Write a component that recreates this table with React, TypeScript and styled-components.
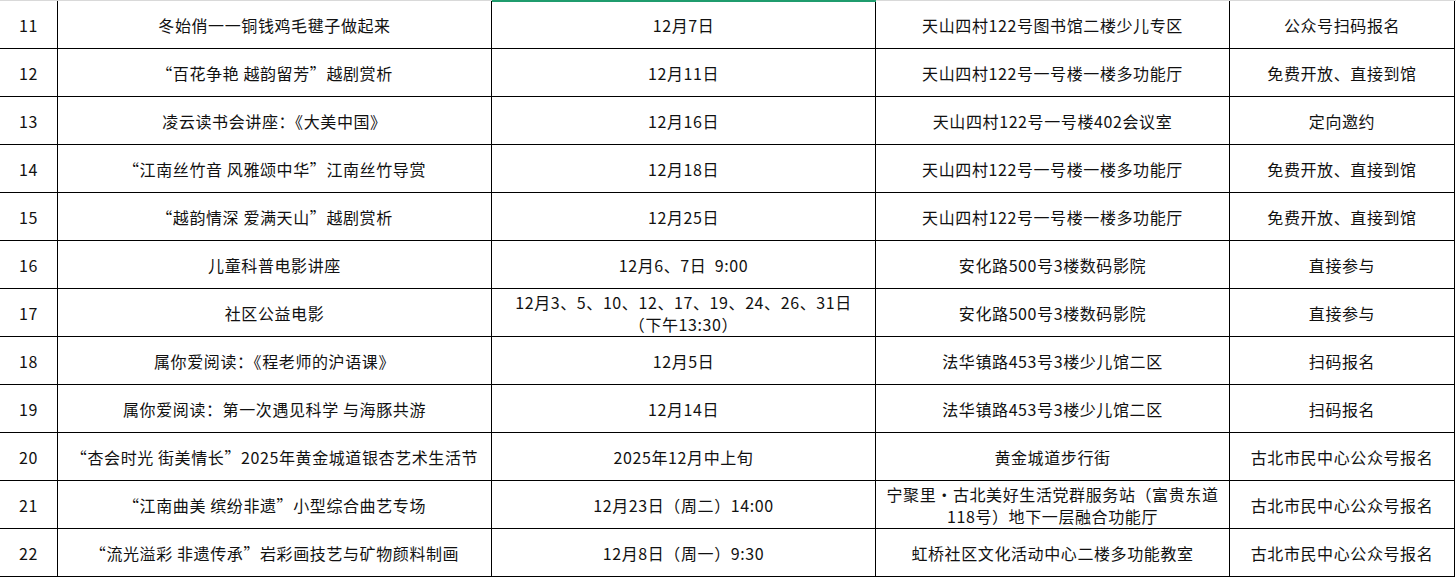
import styled, { createGlobalStyle } from "styled-components";

const GlobalStyle = createGlobalStyle`
  html, body {
    margin: 0;
    padding: 0;
    background: #ffffff;
  }
  body {
    font-family: "Noto Sans CJK SC", "DejaVu Sans", sans-serif;
    color: #000000;
  }
`;

const COLUMNS = "58px 434px 384px 354px 225px";

const Sheet = styled.div`
  width: 1456px;
  height: 577px;
  overflow: hidden;
  background: #ffffff;
`;

const TopEdge = styled.div`
  display: grid;
  grid-template-columns: ${COLUMNS};
  height: 1px;
  background: #d9d9d9;
`;

const Selection = styled.div<{ $col: number }>`
  grid-column: ${(p) => p.$col};
  height: 2px;
  background: #1f9c6d;
  position: relative;
  z-index: 1;
`;

const Row = styled.div`
  display: grid;
  grid-template-columns: ${COLUMNS};
  height: 48px;
`;

const Cell = styled.div`
  display: flex;
  align-items: center;
  justify-content: center;
  text-align: center;
  border-right: 1px solid #000000;
  border-bottom: 1px solid #000000;
  font-size: 16px;
  line-height: 22px;
  letter-spacing: 0.6px;
  color: #111111;
  white-space: nowrap;
  overflow: hidden;
`;

// full-width quote marks, as in the sheet's font
const Quote = styled.span`
  font-feature-settings: "fwid";
`;

type Item = {
  no: number;
  title: string;
  date: string[];
  place: string[];
  signup: string;
};

const rows: Item[] = [
  { no: 11, title: "冬始俏一一铜钱鸡毛毽子做起来", date: ["12月7日"], place: ["天山四村122号图书馆二楼少儿专区"], signup: "公众号扫码报名" },
  { no: 12, title: "“百花争艳 越韵留芳”越剧赏析", date: ["12月11日"], place: ["天山四村122号一号楼一楼多功能厅"], signup: "免费开放、直接到馆" },
  { no: 13, title: "凌云读书会讲座：《大美中国》", date: ["12月16日"], place: ["天山四村122号一号楼402会议室"], signup: "定向邀约" },
  { no: 14, title: "“江南丝竹音 风雅颂中华”江南丝竹导赏", date: ["12月18日"], place: ["天山四村122号一号楼一楼多功能厅"], signup: "免费开放、直接到馆" },
  { no: 15, title: "“越韵情深 爱满天山”越剧赏析", date: ["12月25日"], place: ["天山四村122号一号楼一楼多功能厅"], signup: "免费开放、直接到馆" },
  { no: 16, title: "儿童科普电影讲座", date: ["12月6、7日  9:00"], place: ["安化路500号3楼数码影院"], signup: "直接参与" },
  { no: 17, title: "社区公益电影", date: ["12月3、5、10、12、17、19、24、26、31日", "（下午13:30）"], place: ["安化路500号3楼数码影院"], signup: "直接参与" },
  { no: 18, title: "属你爱阅读：《程老师的沪语课》", date: ["12月5日"], place: ["法华镇路453号3楼少儿馆二区"], signup: "扫码报名" },
  { no: 19, title: "属你爱阅读：第一次遇见科学 与海豚共游", date: ["12月14日"], place: ["法华镇路453号3楼少儿馆二区"], signup: "扫码报名" },
  { no: 20, title: "“杏会时光 街美情长”2025年黄金城道银杏艺术生活节", date: ["2025年12月中上旬"], place: ["黄金城道步行街"], signup: "古北市民中心公众号报名" },
  { no: 21, title: "“江南曲美 缤纷非遗”小型综合曲艺专场", date: ["12月23日（周二）14:00"], place: ["宁聚里·古北美好生活党群服务站（富贵东道", "118号）地下一层融合功能厅"], signup: "古北市民中心公众号报名" },
  { no: 22, title: "“流光溢彩 非遗传承”岩彩画技艺与矿物颜料制画", date: ["12月8日（周一）9:30"], place: ["虹桥社区文化活动中心二楼多功能教室"], signup: "古北市民中心公众号报名" },
];

const Title = ({ text }: { text: string }) => (
  <span>
    {text.split(/([“”])/).map((part, i) =>
      part === "“" || part === "”" ? <Quote key={i}>{part}</Quote> : part
    )}
  </span>
);

const Lines = ({ parts }: { parts: string[] }) => (
  <span style={{ whiteSpace: "pre" }}>
    {parts.map((p, i) => (
      <span key={i}>
        {i > 0 && <br />}
        {p}
      </span>
    ))}
  </span>
);

const App = () => {
  return (
    <>
      <GlobalStyle />
      <Sheet lang="zh-CN">
        <TopEdge>
          <Selection $col={3} />
        </TopEdge>
        {rows.map((r) => (
          <Row key={r.no}>
            <Cell>{r.no}</Cell>
            <Cell>
              <Title text={r.title} />
            </Cell>
            <Cell>
              <Lines parts={r.date} />
            </Cell>
            <Cell>
              <Lines parts={r.place} />
            </Cell>
            <Cell>{r.signup}</Cell>
          </Row>
        ))}
      </Sheet>
    </>
  );
};

export default App;
